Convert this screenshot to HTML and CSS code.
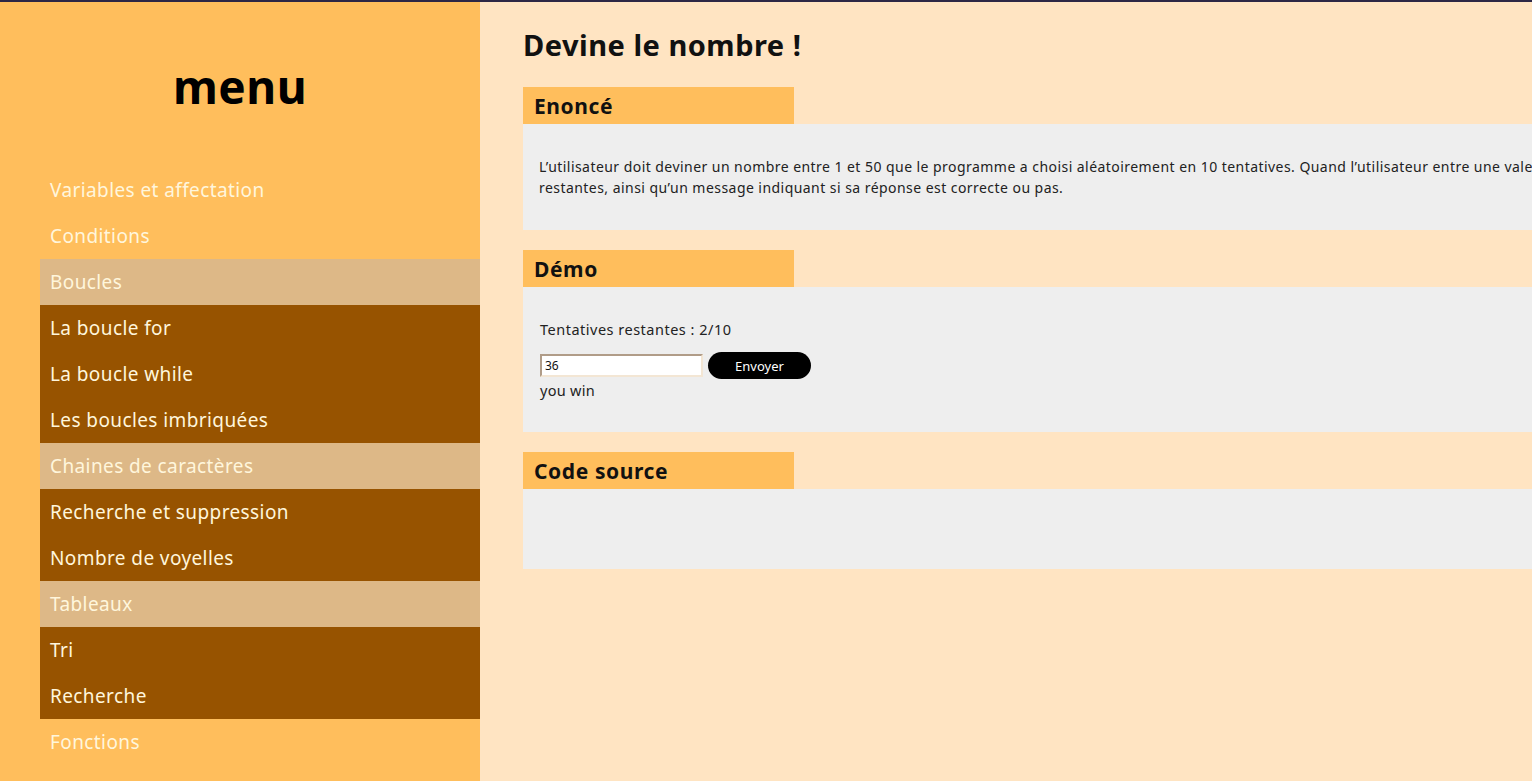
FILE: index.html
```html
<!DOCTYPE html>
<html lang="fr">
<head>
<meta charset="utf-8">
<title>Devine le nombre !</title>
<link rel="stylesheet" href="styles.css">
</head>
<body>
<div class="topline"></div>
<div class="page">
  <aside class="sidebar">
    <h2 class="menu-title">menu</h2>
    <ul class="nav">
      <li class="nav-item">Variables et affectation</li>
      <li class="nav-item">Conditions</li>
      <li class="nav-item cat">Boucles</li>
      <li class="nav-item sub">La boucle for</li>
      <li class="nav-item sub">La boucle while</li>
      <li class="nav-item sub">Les boucles imbriquées</li>
      <li class="nav-item cat">Chaines de caractères</li>
      <li class="nav-item sub">Recherche et suppression</li>
      <li class="nav-item sub">Nombre de voyelles</li>
      <li class="nav-item cat">Tableaux</li>
      <li class="nav-item sub">Tri</li>
      <li class="nav-item sub">Recherche</li>
      <li class="nav-item">Fonctions</li>
    </ul>
  </aside>
  <main class="main">
    <h1 class="title">Devine le nombre !</h1>
    <section class="section">
      <h3 class="section-head">Enoncé</h3>
      <div class="box box-enonce">
        <p class="enonce">L’utilisateur doit deviner un nombre entre 1 et 50 que le programme a choisi aléatoirement en 10 tentatives. Quand l’utilisateur entre une valeur, le programme affiche le nombre de tentatives<br>restantes, ainsi qu’un message indiquant si sa réponse est correcte ou pas.</p>
      </div>
    </section>
    <section class="section">
      <h3 class="section-head">Démo</h3>
      <div class="box box-demo">
        <p class="tries">Tentatives restantes : 2/10</p>
        <div class="form-row">
          <input class="guess" type="text" value="36">
          <button class="send">Envoyer</button>
        </div>
        <p class="result">you win</p>
      </div>
    </section>
    <section class="section">
      <h3 class="section-head">Code source</h3>
      <div class="box box-code"></div>
    </section>
  </main>
</div>
</body>
</html>
```

FILE: styles.css
```css
html, body {
  margin: 0;
  padding: 0;
  height: 100%;
  overflow: hidden;
}
body {
  font-family: "Noto Sans", "DejaVu Sans", sans-serif;
  background: #ffe4c2;
  color: #222;
}
.topline {
  height: 2px;
  background: #2d2745;
}
.page {
  display: flex;
  height: calc(100% - 2px);
}
.sidebar {
  width: 480px;
  flex: none;
  background: #ffbe5c;
}
.menu-title {
  margin: 0;
  padding-top: 56px;
  height: 165px;
  box-sizing: border-box;
  text-align: center;
  font-size: 46px;
  font-weight: 700;
  line-height: 56px;
  color: #000;
  letter-spacing: 0.5px;
}
.nav {
  list-style: none;
  margin: 0;
  padding: 0 0 0 40px;
}
.nav-item {
  height: 46px;
  line-height: 46px;
  padding-left: 10px;
  font-size: 19px;
  letter-spacing: 0.4px;
  color: #fff6dc;
}
.cat {
  background: #ddb887;
}
.sub {
  background: #975300;
}
.main {
  flex: none;
  width: 1400px;
  padding: 24px 0 0 43px;
  box-sizing: border-box;
}
.title {
  margin: 0 0 23px;
  font-size: 29px;
  font-weight: 700;
  line-height: 38px;
  letter-spacing: 0.5px;
  color: #111;
}
.section {
  margin-bottom: 20px;
}
.section-head {
  margin: 0;
  width: 271px;
  height: 37px;
  box-sizing: border-box;
  padding-left: 11px;
  background: #ffbe5c;
  font-size: 21px;
  font-weight: 700;
  line-height: 38px;
  letter-spacing: 0.6px;
  color: #111;
}
.box {
  background: #eeeeee;
  width: 1100px;
  box-sizing: border-box;
}
.box-enonce {
  height: 106px;
  padding: 32px 0 0 16px;
}
.enonce {
  margin: 0;
  font-size: 14px;
  line-height: 21px;
  letter-spacing: 0.45px;
  white-space: nowrap;
  color: #222;
}
.box-demo {
  height: 145px;
  padding: 33px 0 0 17px;
}
.tries {
  margin: 0;
  font-size: 14.5px;
  line-height: 18px;
  letter-spacing: 0.5px;
  color: #222;
}
.form-row {
  display: flex;
  align-items: center;
  gap: 5px;
  margin-top: 14px;
}
.guess {
  width: 163px;
  height: 23px;
  box-sizing: border-box;
  margin: 0;
  padding: 0 3px;
  border: 2px solid #b09c88;
  border-right-color: #f3e6d4;
  border-bottom-color: #f3e6d4;
  background: #fff;
  font-family: "Noto Sans", sans-serif;
  font-size: 12px;
  color: #111;
}
.send {
  width: 103px;
  height: 27px;
  border: none;
  border-radius: 14px;
  background: #000;
  color: #fff;
  font-family: "Noto Sans", sans-serif;
  font-size: 13px;
  padding: 0;
}
.result {
  margin: 2px 0 0;
  font-size: 14.5px;
  line-height: 18px;
  letter-spacing: 0.3px;
  color: #222;
}
.box-code {
  height: 80px;
}
```
